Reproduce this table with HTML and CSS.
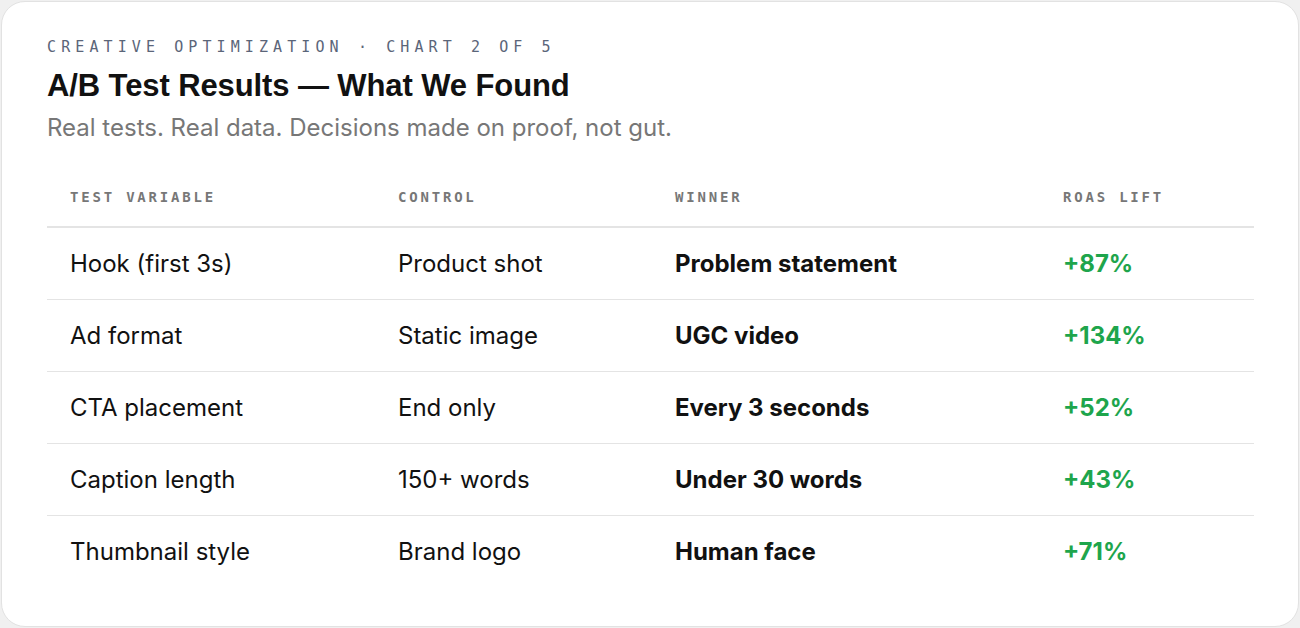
FILE: index.html
```html
<!DOCTYPE html>
<html lang="en">
<head>
  <meta charset="UTF-8">
  <meta name="viewport" content="width=device-width, initial-scale=1.0">
  <title>A/B Test Results</title>
  <link rel="stylesheet" href="styles.css">
</head>
<body>
  <div class="card">
    <div class="eyebrow">Creative Optimization · Chart 2 of 5</div>
    <h1>A/B Test Results — What We Found</h1>
    <p class="subtitle">Real tests. Real data. Decisions made on proof, not gut.</p>

    <table class="results">
      <thead>
        <tr>
          <th class="col-var">Test Variable</th>
          <th class="col-control">Control</th>
          <th class="col-winner">Winner</th>
          <th class="col-lift">ROAS Lift</th>
        </tr>
      </thead>
      <tbody>
        <tr>
          <td>Hook (first 3s)</td>
          <td>Product shot</td>
          <td class="winner">Problem statement</td>
          <td class="lift">+87%</td>
        </tr>
        <tr>
          <td>Ad format</td>
          <td>Static image</td>
          <td class="winner">UGC video</td>
          <td class="lift">+134%</td>
        </tr>
        <tr>
          <td>CTA placement</td>
          <td>End only</td>
          <td class="winner">Every 3 seconds</td>
          <td class="lift">+52%</td>
        </tr>
        <tr>
          <td>Caption length</td>
          <td>150+ words</td>
          <td class="winner">Under 30 words</td>
          <td class="lift">+43%</td>
        </tr>
        <tr>
          <td>Thumbnail style</td>
          <td>Brand logo</td>
          <td class="winner">Human face</td>
          <td class="lift">+71%</td>
        </tr>
      </tbody>
    </table>
  </div>
</body>
</html>
```

FILE: styles.css
```css
* {
  box-sizing: border-box;
}
body {
  margin: 0;
  padding: 1px;
  background: #f0f0f0;
  font-family: Inter, "Liberation Sans", sans-serif;
  color: #111;
}
.card {
  height: 626px;
  padding: 32px 44px 0 45px;
  background: #fff;
  border: 1px solid #e2e2e2;
  border-radius: 24px;
}
.eyebrow {
  font-family: "DejaVu Sans Mono", monospace;
  font-size: 15px;
  letter-spacing: 0.34em;
  text-transform: uppercase;
  color: #5b6579;
  line-height: 26px;
}
h1 {
  margin: 6px 0 0;
  font-family: "Liberation Sans", Arial, sans-serif;
  font-size: 31px;
  font-weight: 700;
  letter-spacing: -0.1px;
  line-height: 40px;
}
.subtitle {
  margin: 7px 0 0;
  font-size: 24px;
  color: #777;
  line-height: 30px;
}
.results {
  width: 100%;
  margin-top: 45px;
  border-collapse: collapse;
}
.results th {
  padding: 0 23px 20px;
  text-align: left;
  font-family: "DejaVu Sans Mono", monospace;
  font-size: 14px;
  font-weight: 700;
  line-height: 18px;
  letter-spacing: 0.2em;
  text-transform: uppercase;
  color: #777;
  border-bottom: 2px solid #e4e4e4;
}
.col-var { width: 328px; }
.col-control { width: 277px; }
.col-winner { width: 388px; }
.results td {
  height: 72px;
  padding: 0 23px;
  font-size: 24px;
  border-bottom: 1px solid #e4e4e4;
}
.results tbody tr:last-child td {
  border-bottom: none;
}
.winner {
  font-weight: 700;
}
.lift {
  font-weight: 700;
  color: #1ea54c;
}
```
